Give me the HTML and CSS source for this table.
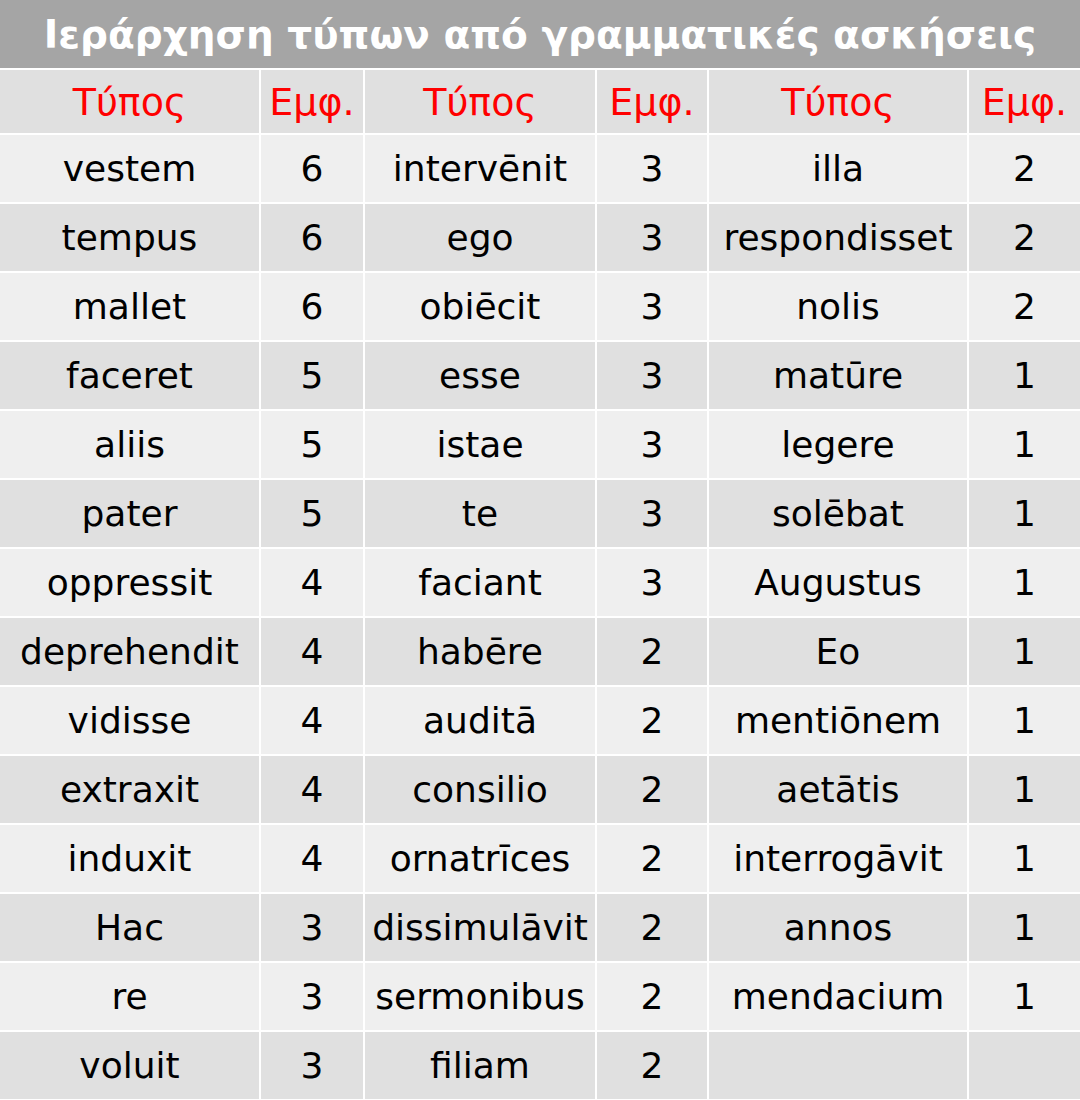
FILE: index.html
```html
<!DOCTYPE html>
<html lang="el">
<head>
<meta charset="utf-8">
<link rel="stylesheet" href="styles.css">
</head>
<body>
<div class="sheet">
  <div class="title">Ιεράρχηση τύπων από γραμματικές ασκήσεις</div>
  <div class="row head">
    <div class="c">Τύπος</div><div class="c">Εμφ.</div>
    <div class="c">Τύπος</div><div class="c">Εμφ.</div>
    <div class="c">Τύπος</div><div class="c">Εμφ.</div>
  </div>
  <div class="row a"><div class="c">vestem</div><div class="c">6</div><div class="c">intervēnit</div><div class="c">3</div><div class="c">illa</div><div class="c">2</div></div>
  <div class="row b"><div class="c">tempus</div><div class="c">6</div><div class="c">ego</div><div class="c">3</div><div class="c">respondisset</div><div class="c">2</div></div>
  <div class="row a"><div class="c">mallet</div><div class="c">6</div><div class="c">obiēcit</div><div class="c">3</div><div class="c">nolis</div><div class="c">2</div></div>
  <div class="row b"><div class="c">faceret</div><div class="c">5</div><div class="c">esse</div><div class="c">3</div><div class="c">matūre</div><div class="c">1</div></div>
  <div class="row a"><div class="c">aliis</div><div class="c">5</div><div class="c">istae</div><div class="c">3</div><div class="c">legere</div><div class="c">1</div></div>
  <div class="row b"><div class="c">pater</div><div class="c">5</div><div class="c">te</div><div class="c">3</div><div class="c">solēbat</div><div class="c">1</div></div>
  <div class="row a"><div class="c">oppressit</div><div class="c">4</div><div class="c">faciant</div><div class="c">3</div><div class="c">Augustus</div><div class="c">1</div></div>
  <div class="row b"><div class="c">deprehendit</div><div class="c">4</div><div class="c">habēre</div><div class="c">2</div><div class="c">Eo</div><div class="c">1</div></div>
  <div class="row a"><div class="c">vidisse</div><div class="c">4</div><div class="c">auditā</div><div class="c">2</div><div class="c">mentiōnem</div><div class="c">1</div></div>
  <div class="row b"><div class="c">extraxit</div><div class="c">4</div><div class="c">consilio</div><div class="c">2</div><div class="c">aetātis</div><div class="c">1</div></div>
  <div class="row a"><div class="c">induxit</div><div class="c">4</div><div class="c">ornatrīces</div><div class="c">2</div><div class="c">interrogāvit</div><div class="c">1</div></div>
  <div class="row b"><div class="c">Hac</div><div class="c">3</div><div class="c">dissimulāvit</div><div class="c">2</div><div class="c">annos</div><div class="c">1</div></div>
  <div class="row a"><div class="c">re</div><div class="c">3</div><div class="c">sermonibus</div><div class="c">2</div><div class="c">mendacium</div><div class="c">1</div></div>
  <div class="row b"><div class="c">voluit</div><div class="c">3</div><div class="c">filiam</div><div class="c">2</div><div class="c"></div><div class="c"></div></div>
</div>
</body>
</html>
```
FILE: styles.css
```css
html, body {
  margin: 0;
  padding: 0;
  background: #ffffff;
}
.sheet {
  width: 1080px;
  display: flex;
  flex-direction: column;
  gap: 2px;
  background: #ffffff;
  font-family: "DejaVu Sans", "Noto Sans", sans-serif;
}
.title {
  height: 68px;
  background: #a5a5a5;
  color: #ffffff;
  font-weight: bold;
  font-size: 39px;
  line-height: 70px;
  text-align: center;
}
.row {
  display: grid;
  grid-template-columns: 259px 102px 230px 110px 258px 1fr;
  column-gap: 2px;
  height: 67px;
}
.c {
  display: flex;
  align-items: center;
  justify-content: center;
  font-size: 36px;
  color: #000000;
  white-space: nowrap;
}
.head {
  height: 63px;
}
.head .c {
  background: #e0e0e0;
  color: #ff0000;
  font-size: 38px;
}
.a .c { background: #efefef; }
.b .c { background: #e0e0e0; }
```
